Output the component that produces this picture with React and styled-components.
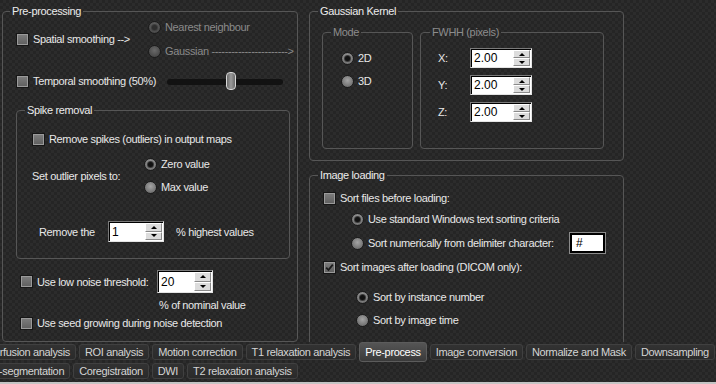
import styled, { createGlobalStyle } from 'styled-components'

const GlobalStyle = createGlobalStyle`
  html, body {
    margin: 0;
    padding: 0;
    background: #262626;
  }
  body {
    font-family: "Liberation Sans", Arial, sans-serif;
    font-size: 11px;
    letter-spacing: -0.35px;
    color: #e8e8e8;
  }
`

const Window = styled.div`
  width: 716px;
  height: 384px;
  overflow: hidden;
  display: flex;
  flex-direction: column;
  background-color: #252525;
  background-image:
    linear-gradient(45deg, #2c2c2c 25%, transparent 25%, transparent 75%, #2c2c2c 75%),
    linear-gradient(45deg, #2c2c2c 25%, transparent 25%, transparent 75%, #2c2c2c 75%);
  background-size: 6px 6px;
  background-position: 0 0, 3px 3px;
`

const Main = styled.div`
  display: flex;
  height: 342px;
  flex: none;
  overflow: hidden;
`

const Column = styled.div`
  display: flex;
  flex-direction: column;
  margin-left: ${p => p.$ml}px;
  padding-top: 4px;
`

const Group = styled.fieldset`
  margin: ${p => p.$mt || 0}px 0 0 0;
  padding: 0;
  min-width: 0;
  box-sizing: border-box;
  width: ${p => p.$w}px;
  height: ${p => p.$h}px;
  border: 1px solid #565656;
  border-radius: 4px;
  flex: none;
`

const Legend = styled.legend`
  padding: 0 2px;
  margin-left: ${p => p.$ml ?? 8}px;
  line-height: 14px;
  color: ${p => (p.$dim ? '#8c8c8c' : '#ececec')};
`

const Body = styled.div`
  display: flex;
  flex-direction: column;
  padding: ${p => p.$pad};
`

const Row = styled.div`
  display: ${p => (p.$grid ? 'grid' : 'flex')};
  grid-template-columns: ${p => p.$cols || 'none'};
  column-gap: ${p => p.$gap || 0}px;
  align-items: ${p => p.$align || 'center'};
  height: ${p => (p.$h ? `${p.$h}px` : 'auto')};
  margin-top: ${p => p.$mt || 0}px;
  margin-left: ${p => p.$ml || 0}px;
`

const Stack = styled.div`
  display: flex;
  flex-direction: column;
  gap: ${p => p.$gap}px;
`

const Option = styled.label`
  display: flex;
  align-items: center;
  gap: ${p => p.$gap ?? 4}px;
  height: ${p => p.$h || 18}px;
  white-space: nowrap;
  color: ${p => (p.$dim ? '#8a8a8a' : '#e8e8e8')};
`

const Text = styled.span`
  white-space: nowrap;
  margin-left: ${p => p.$ml || 0}px;
  color: ${p => (p.$dim ? '#8a8a8a' : '#e8e8e8')};
`

const Box = styled.span`
  width: 13px;
  height: 13px;
  box-sizing: border-box;
  border: 1px solid #161616;
  background: linear-gradient(#7e7e7e, #5e5e5e);
  box-shadow: inset 0 0 0 1px #9a9a9a;
  display: flex;
  align-items: center;
  justify-content: center;
  flex: none;
`

const Circle = styled.span`
  width: 13px;
  height: 13px;
  box-sizing: border-box;
  border-radius: 50%;
  border: 1px solid #1c1c1c;
  background: ${p =>
    p.$dim
      ? 'radial-gradient(circle at 50% 40%, #6a6a6a, #4a4a4a 70%, #3a3a3a)'
      : 'radial-gradient(circle at 50% 40%, #a4a4a4, #7a7a7a 60%, #5a5a5a)'};
  display: flex;
  align-items: center;
  justify-content: center;
  flex: none;
  &::after {
    content: '';
    display: ${p => (p.$on ? 'block' : 'none')};
    width: 5px;
    height: 5px;
    border-radius: 50%;
    background: ${p => (p.$dim ? '#2e2e2e' : '#111')};
    box-shadow: 0 0 0 1px ${p => (p.$dim ? '#3e3e3e' : '#3a3a3a')};
  }
`

const Check = ({ on, children }) => (
  <Option>
    <Box>
      {on && (
        <svg width="9" height="9" viewBox="0 0 9 9">
          <path d="M1.2 4.6 L3.5 7 L7.8 1.6" fill="none" stroke="#1b1b1b" strokeWidth="1.8" />
        </svg>
      )}
    </Box>
    {children}
  </Option>
)

const Radio = ({ on, dim, children }) => (
  <Option $dim={dim}>
    <Circle $on={on} $dim={dim} />
    {children}
  </Option>
)

const SpinWrap = styled.div`
  display: flex;
  width: ${p => p.$w}px;
  height: ${p => p.$h}px;
  box-sizing: border-box;
  background: #fff;
  border: 1px solid;
  border-color: #7a7a7a #e4e4e4 #e4e4e4 #7a7a7a;
  box-shadow: inset 1px 1px 0 #000;
`

const SpinValue = styled.span`
  flex: 1;
  display: flex;
  align-items: center;
  padding-left: 3px;
  color: #000;
  font-size: 12px;
  letter-spacing: 0;
`

const SpinButtons = styled.div`
  display: flex;
  flex-direction: column;
  width: 17px;
  margin: 1px 1px 1px 0;
`

const SpinButton = styled.div`
  flex: 1;
  background: #dcdcdc;
  border: 1px solid;
  border-color: #fff #8a8a8a #8a8a8a #fff;
  display: flex;
  align-items: center;
  justify-content: center;
  &::after {
    content: '';
    border-left: 3px solid transparent;
    border-right: 3px solid transparent;
    ${p => (p.$up ? 'border-bottom: 3px solid #000;' : 'border-top: 3px solid #000;')}
  }
`

const Spin = ({ value, w, h }) => (
  <SpinWrap $w={w} $h={h}>
    <SpinValue>{value}</SpinValue>
    <SpinButtons>
      <SpinButton $up />
      <SpinButton />
    </SpinButtons>
  </SpinWrap>
)

const Field = styled.div`
  width: 35px;
  height: 20px;
  box-sizing: border-box;
  background: #fff;
  border: 2px solid #000;
  outline: 1px solid #8a8a8a;
  color: #000;
  font-size: 12px;
  letter-spacing: 0;
  padding-left: 4px;
  line-height: 16px;
`

const Track = styled.div`
  position: relative;
  width: 116px;
  height: 6px;
  border-radius: 3px;
  background: #121212;
  margin-top: 2px;
`

const Thumb = styled.div`
  position: absolute;
  left: 59px;
  top: -7px;
  width: 10px;
  height: 18px;
  box-sizing: border-box;
  border-radius: 4px;
  background: linear-gradient(90deg, #6a6a6a, #9a9a9a 50%, #6a6a6a);
  border: 1px solid #d8d8d8;
`

const Tabs = styled.div`
  display: flex;
  flex-direction: column;
  flex: none;
  height: 42px;
  border-bottom: 2px solid #c4c4c4;
  box-sizing: border-box;
`

const TabRow = styled.div`
  display: flex;
  align-items: center;
  gap: 3px;
  height: 19px;
  margin-left: ${p => p.$ml}px;
  white-space: nowrap;
`

const Tab = styled.div`
  flex: none;
  height: ${p => (p.$active ? 20 : 16)}px;
  min-width: ${p => (p.$blank ? 20 : 0)}px;
  padding: 0 5px;
  display: flex;
  align-items: center;
  box-sizing: border-box;
  border: 1px solid ${p => (p.$active ? '#5c5c5c' : '#404040')};
  border-radius: 3px;
  background: ${p =>
    p.$active ? 'linear-gradient(#555, #3a3a3a)' : 'linear-gradient(#323232, #2a2a2a)'};
  color: ${p => (p.$active ? '#fff' : '#d4d4d4')};
  position: relative;
  z-index: ${p => (p.$active ? 1 : 0)};
`

const tabRows = [
  {
    ml: -19,
    tabs: ['Perfusion analysis', 'ROI analysis', 'Motion correction', 'T1 relaxation analysis', 'Pre-process', 'Image conversion', 'Normalize and Mask', 'Downsampling', ''],
  },
  { ml: -7, tabs: ['-segmentation', 'Coregistration', 'DWI', 'T2 relaxation analysis'] },
]

const App = () => {
  return (
    <>
      <GlobalStyle />
      <Window>
        <Main>
          <Column $ml={2}>
            <Group $w={296} $h={338}>
              <Legend $ml={7}>Pre-processing</Legend>
              <Body $pad="0 7px 0 13px">
                <Row $grid $cols="132px 1fr">
                  <Check>Spatial smoothing --&gt;</Check>
                  <Stack $gap={6}>
                    <Radio on dim>Nearest neighbour</Radio>
                    <Radio dim>Gaussian -----------------------&gt;</Radio>
                  </Stack>
                </Row>
                <Row $grid $cols="151px 116px" $mt={12} $h={18}>
                  <Check>Temporal smoothing (50%)</Check>
                  <Track>
                    <Thumb />
                  </Track>
                </Row>
                <Group $w={274} $h={156} $mt={13}>
                  <Legend>Spike removal</Legend>
                  <Body $pad="0 0 0 15px">
                    <Row $mt={13} $h={18}>
                      <Check>Remove spikes (outliers) in output maps</Check>
                    </Row>
                    <Row $grid $cols="112px 1fr" $mt={7}>
                      <Text>Set outlier pixels to:</Text>
                      <Stack $gap={5}>
                        <Radio on>Zero value</Radio>
                        <Radio>Max value</Radio>
                      </Stack>
                    </Row>
                    <Row $grid $cols="69px 56px 1fr" $mt={25} $ml={7} $h={21}>
                      <Text>Remove the</Text>
                      <Spin value="1" w={56} h={21} />
                      <Text $ml={12}>% highest values</Text>
                    </Row>
                  </Body>
                </Group>
                <Row $grid $cols="137px 56px" $mt={11} $ml={4} $h={22}>
                  <Check>Use low noise threshold:</Check>
                  <Spin value="20" w={56} h={23} />
                </Row>
                <Row $mt={5} $ml={143} $h={16}>
                  <Text>% of nominal value</Text>
                </Row>
                <Row $mt={2} $ml={4} $h={16}>
                  <Check>Use seed growing during noise detection</Check>
                </Row>
              </Body>
            </Group>
          </Column>
          <Column $ml={11}>
            <Group $w={315} $h={157}>
              <Legend>Gaussian Kernel</Legend>
              <Body $pad="7px 0 0 12px">
                <Row $grid $cols="91px 184px" $gap={7} $align="start">
                  <Group $w={91} $h={124}>
                    <Legend $dim>Mode</Legend>
                    <Body $pad="10px 0 0 18px">
                      <Stack $gap={5}>
                        <Radio on>2D</Radio>
                        <Radio>3D</Radio>
                      </Stack>
                    </Body>
                  </Group>
                  <Group $w={184} $h={124}>
                    <Legend $dim $ml={9}>FWHH (pixels)</Legend>
                    <Body $pad="9px 0 0 17px">
                      <Stack $gap={7}>
                        {['X:', 'Y:', 'Z:'].map(axis => (
                          <Row key={axis} $grid $cols="32px 62px" $h={20}>
                            <Text>{axis}</Text>
                            <Spin value="2.00" w={62} h={20} />
                          </Row>
                        ))}
                      </Stack>
                    </Body>
                  </Group>
                </Row>
              </Body>
            </Group>
            <Group $w={315} $h={200} $mt={7}>
              <Legend>Image loading</Legend>
              <Body $pad="0 0 0 13px">
                <Row $mt={7} $h={18}>
                  <Check>Sort files before loading:</Check>
                </Row>
                <Row $mt={3} $ml={28} $h={18}>
                  <Radio on>Use standard Windows text sorting criteria</Radio>
                </Row>
                <Row $grid $cols="219px 35px" $mt={5} $ml={28} $h={20}>
                  <Radio>Sort numerically from delimiter character:</Radio>
                  <Field>#</Field>
                </Row>
                <Row $mt={5} $h={18}>
                  <Check on>Sort images after loading (DICOM only):</Check>
                </Row>
                <Row $mt={12} $ml={33} $h={18}>
                  <Radio on>Sort by instance number</Radio>
                </Row>
                <Row $mt={5} $ml={33} $h={18}>
                  <Radio>Sort by image time</Radio>
                </Row>
              </Body>
            </Group>
          </Column>
        </Main>
        <Tabs>
          {tabRows.map((row, i) => (
            <TabRow key={i} $ml={row.ml}>
              {row.tabs.map((t, j) => (
                <Tab key={j} $active={t === 'Pre-process'} $blank={t === ''}>
                  {t}
                </Tab>
              ))}
            </TabRow>
          ))}
        </Tabs>
      </Window>
    </>
  )
}

export default App
